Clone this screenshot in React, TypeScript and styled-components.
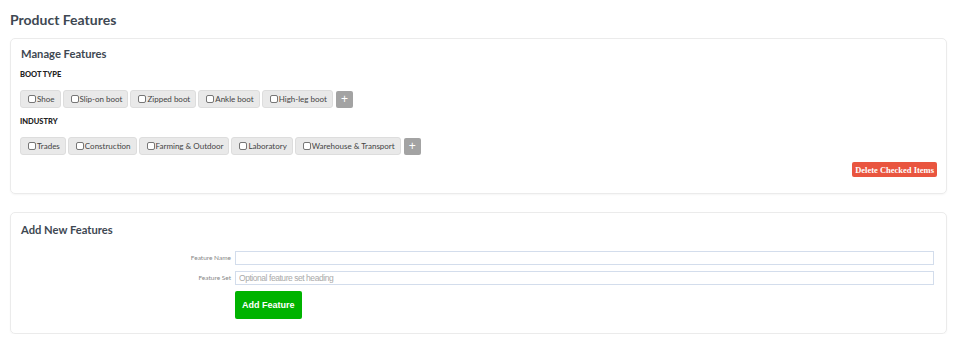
import styled, { createGlobalStyle } from 'styled-components'

const GlobalStyle = createGlobalStyle`
    body{
        margin: 0;
        background: #ffffff;
        font-family: Lato, "Liberation Sans", sans-serif;
        color: #3c4650;
    }
`

const Page = styled.div`
    padding: 10px 13px 0 10px;
`

const Title = styled.h1`
    margin: 0;
    font-size: 14px;
    line-height: 20px;
    font-weight: 700;
    color: #3e4852;
`

const Card = styled.section<{ $top?: number; $bottom?: number; $gap?: number }>`
    margin-top: ${p => p.$gap ?? 8}px;
    border: 1px solid #ebebeb;
    border-radius: 5px;
    box-shadow: 0 1px 2px rgba(0,0,0,0.04);
    padding: ${p => p.$top ?? 8}px 9px ${p => p.$bottom ?? 16}px 9px;
`

const CardTitle = styled.h2`
    margin: 0;
    padding-left: 1px;
    font-size: 11.2px;
    line-height: 14px;
    font-weight: 700;
    color: #3e4852;
`

const SetLabel = styled.div`
    margin-top: 8px;
    font-size: 7.5px;
    line-height: 12px;
    font-weight: 900;
    color: #222;
`

const TagRow = styled.div`
    display: flex;
    align-items: center;
    gap: 2px;
    margin-top: 9px;
`

const Tag = styled.label`
    display: flex;
    align-items: center;
    gap: 1px;
    height: 18px;
    box-sizing: border-box;
    padding: 0 5px 0 7px;
    background: #e9e9e9;
    border: 1px solid #dddddd;
    border-radius: 3px;
    font-size: 8px;
    color: #444;
`

const Check = styled.input`
    appearance: none;
    margin: 0;
    width: 8px;
    height: 8px;
    border: 1px solid #767676;
    border-radius: 2px;
    background: #fff;
`

const PlusButton = styled.button`
    margin-left: 1px;
    width: 17px;
    height: 17px;
    padding: 0;
    border: none;
    border-radius: 2px;
    background: #a3a3a3;
    color: #fff;
    font-size: 12px;
    line-height: 17px;
    font-family: "Liberation Sans", sans-serif;
`

const ActionRow = styled.div`
    display: flex;
    justify-content: flex-end;
    margin-top: 7px;
`

const DeleteButton = styled.button`
    height: 15px;
    padding: 0 3px;
    border: none;
    border-radius: 2px;
    background: #e9553f;
    color: #fff;
    font-family: "Liberation Serif", serif;
    font-weight: 700;
    font-size: 8.5px;
`

const Form = styled.div`
    display: grid;
    grid-template-columns: 211px 1fr;
    column-gap: 4px;
    row-gap: 6px;
    margin-top: 14px;
    padding-right: 3px;
`

const FieldLabel = styled.label`
    text-align: right;
    font-size: 6.5px;
    line-height: 14px;
    color: #888;
`

const TextInput = styled.input`
    height: 14px;
    box-sizing: border-box;
    margin: 0;
    padding: 0 3px;
    border: 1px solid #d3ddec;
    font-family: "Liberation Sans", sans-serif;
    font-size: 8.5px;
    letter-spacing: -0.45px;
    color: #333;

    &::placeholder{
        color: #aaa;
    }
`

const AddButton = styled.button`
    grid-column: 2;
    justify-self: start;
    height: 28px;
    padding: 0 7px;
    border: none;
    border-radius: 2px;
    background: #00b300;
    color: #fff;
    font-family: "Liberation Sans", sans-serif;
    font-weight: 700;
    font-size: 9px;
`

const featureSets = [
    { name: 'BOOT TYPE', items: ['Shoe', 'Slip-on boot', 'Zipped boot', 'Ankle boot', 'High-leg boot'] },
    { name: 'INDUSTRY', items: ['Trades', 'Construction', 'Farming & Outdoor', 'Laboratory', 'Warehouse & Transport'] },
]

const App = () => {
    return (
        <Page>
            <GlobalStyle />
            <Title>Product Features</Title>

            <Card>
                <CardTitle>Manage Features</CardTitle>
                {featureSets.map(set => (
                    <div key={set.name}>
                        <SetLabel>{set.name}</SetLabel>
                        <TagRow>
                            {set.items.map(item => (
                                <Tag key={item}>
                                    <Check type="checkbox" />
                                    {item}
                                </Tag>
                            ))}
                            <PlusButton>+</PlusButton>
                        </TagRow>
                    </div>
                ))}
                <ActionRow>
                    <DeleteButton>Delete Checked Items</DeleteButton>
                </ActionRow>
            </Card>

            <Card $gap={18} $top={10} $bottom={14}>
                <CardTitle>Add New Features</CardTitle>
                <Form>
                    <FieldLabel>Feature Name</FieldLabel>
                    <TextInput type="text" />
                    <FieldLabel>Feature Set</FieldLabel>
                    <TextInput type="text" placeholder="Optional feature set heading" />
                    <AddButton>Add Feature</AddButton>
                </Form>
            </Card>
        </Page>
    )
}

export default App
